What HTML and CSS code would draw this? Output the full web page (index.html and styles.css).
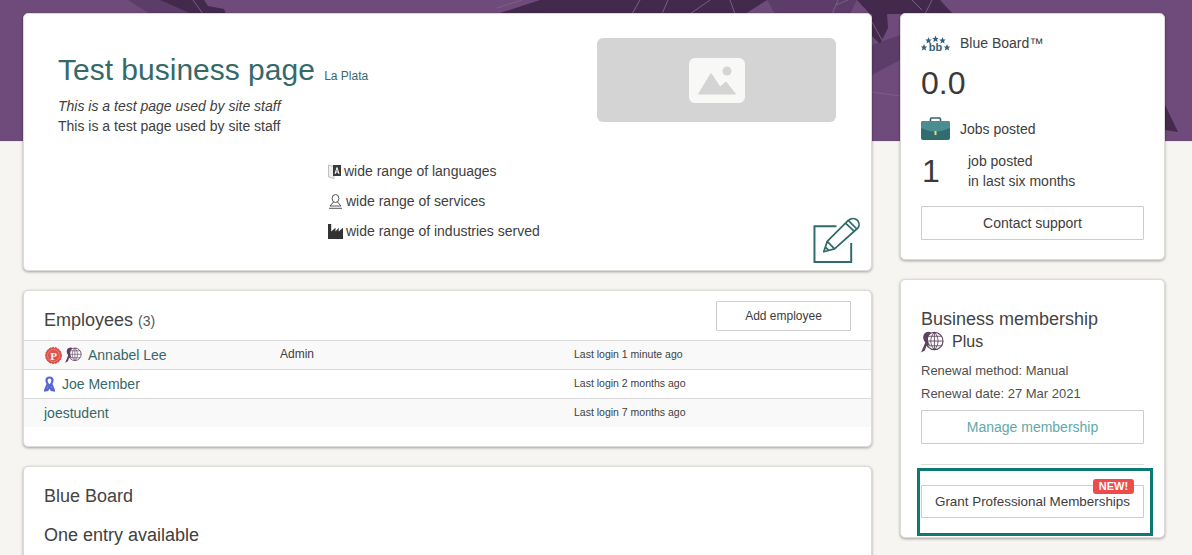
FILE: index.html
```html
<!DOCTYPE html>
<html lang="en">
<head>
<meta charset="utf-8">
<title>Test business page</title>
<link rel="stylesheet" href="styles.css">
</head>
<body>
<svg class="defs" aria-hidden="true">
  <defs>
    <path id="star" d="M0 -3.400 L1 -1.100 L3.300 -1 L1.500 .6 L2.100 3 L0 1.700 L-2.100 3 L-1.500 .6 L-3.300 -1 L-1 -1.100Z"/>
    <g id="plus-ribbon">
      <circle cx="14" cy="10.500" r="9" fill="#fff" stroke="#5d4160" stroke-width="1.200"/>
      <path d="M14 1.500 V19.500 M5 10.500 H23 M6.500 5.500 H21.500 M6.500 15.500 H21.500 M14 1.500 C9 6 9 15 14 19.500 C19 15 19 6 14 1.500" fill="none" stroke="#5d4160" stroke-width=".9"/>
      <path d="M0 22.500 L4.500 12 C1.500 8.500 1.500 3.500 5 1.500 C7 .4 9 .4 10.500 1.500 C7.500 4 6.500 9 8 12.500 L10 16 L7.500 14.500 L5.500 16 L4 20.500Z" fill="#5d4160"/>
    </g>
  </defs>
</svg>
<div class="banner">
  <svg class="banner-art" viewBox="0 0 1192 141" preserveAspectRatio="none" aria-hidden="true">
    <path class="mid" d="M128 0 H165 L195 14 H150Z M767 0 H857 L850 14 H775Z M872 45 L900 35 V60 L872 75Z"/>
    <path class="dark" d="M160 0 H204 L208 6 L224 9 L226 14 H192Z"/>
    <path class="dark" d="M497 14 L540 0 H767 L745 14Z"/>
    <path class="dark" d="M857 0 H940 L953 14 H870Z"/>
    <path class="dark" d="M872 0 H886 L888 28 L880 44 L872 36Z"/>
    <path class="dark" d="M1165 105 L1178 132 L1165 130Z"/>
    <path class="line" d="M193 0 L203 14 M497 8 L522 0 M640 0 L632 14 M668 0 L662 14 M710 0 L690 14 M730 0 L735 14 M838 0 L832 14 M848 0 L836 5 M912 0 L922 10 M932 0 L925 14 M872 22 L882 40 M872 92 L900 96"/>
  </svg>
</div>
<main class="page">
  <div class="col-main">
    <section class="card profile">
      <div class="profile-top">
        <div class="profile-intro">
          <h1 class="title">Test business page <small class="place">La Plata</small></h1>
          <p class="tagline">This is a test page used by site staff</p>
          <p class="desc">This is a test page used by site staff</p>
        </div>
        <div class="logo-box">
          <svg class="logo-icon" viewBox="0 0 56 45" aria-hidden="true">
            <rect width="56" height="45" rx="6" fill="#f8f8f6"/>
            <circle cx="38" cy="13" r="4.500" fill="#d4d4d4"/>
            <path d="M9.500 36 L22 15.500 L31 29 L37 24 L46.500 36Z" fill="#d4d4d4" stroke="#d4d4d4" stroke-linejoin="round"/>
          </svg>
        </div>
      </div>
      <ul class="features">
        <li>
          <svg class="feat-icon narrow" viewBox="0 0 13 15" aria-hidden="true"><path d="M.5 1 L6 2.500 V14.500 L.5 13Z" fill="#eee" stroke="#aaa" stroke-width=".7"/><rect x="5" y="1" width="8" height="11" fill="#3a3a3a"/><path d="M7 10 L9 3.500 L11 10 M7.700 8 H10.300" fill="none" stroke="#fff" stroke-width="1"/></svg>
          wide range of languages
        </li>
        <li>
          <svg class="feat-icon" viewBox="0 0 14 15" aria-hidden="true"><ellipse cx="7" cy="4.500" rx="3.400" ry="4" fill="none" stroke="#444" stroke-width=".9"/><path d="M5 8 L1.500 12 H12.500 L9 8 M.5 14.300 H13.500" fill="none" stroke="#444" stroke-width=".9"/></svg>
          wide range of services
        </li>
        <li>
          <svg class="feat-icon" viewBox="0 0 14 14" aria-hidden="true"><path d="M0 0 H3 V7 L7 3.500 V7 L10 3.500 V7 L14 3.500 V14 H0Z" fill="#333"/></svg>
          wide range of industries served
        </li>
      </ul>
      <svg class="edit-icon" viewBox="0 0 48 48" aria-hidden="true">
        <path d="M24 9 H1.500 V45.500 H39 V26" fill="none" stroke="#2f6b6b" stroke-width="2"/>
        <path d="M11 35 L14.500 24.500 L36 3 C39 .5 43 .5 45.500 3 C47.500 5.500 47.500 9 45.500 11 L22 32Z M14.500 24.500 L22 32 M33.500 6 L42.500 14.500 M36.500 3.500 L45 12 M12.500 30 L16.500 34" fill="none" stroke="#2f6b6b" stroke-width="1.800" stroke-linejoin="round"/>
      </svg>
    </section>

    <section class="card employees">
      <header class="emp-head">
        <h2 class="heading">Employees <span class="count">(3)</span></h2>
        <button class="btn btn-add">Add employee</button>
      </header>
      <div class="emp-row shade">
        <div class="emp-name">
          <svg class="badge-p" viewBox="0 0 17 17" aria-hidden="true"><circle cx="8.500" cy="8.500" r="8" fill="#e0524a" stroke="#c9463f" stroke-width="1" stroke-dasharray="2 1"/><circle cx="8.500" cy="8.500" r="6" fill="none" stroke="#f0a09a" stroke-width=".5"/><text x="8.500" y="12.500" class="badge-letter">P</text></svg>
          <svg class="badge-g" viewBox="0 0 24 23" aria-hidden="true"><use href="#plus-ribbon"/></svg>
          <a class="person">Annabel Lee</a>
        </div>
        <div class="emp-role">Admin</div>
        <div class="emp-login">Last login 1 minute ago</div>
      </div>
      <div class="emp-row">
        <div class="emp-name">
          <svg class="ribbon" viewBox="0 0 11 16" aria-hidden="true"><path d="M3.500 8.500 L1 14.500 L3.500 14 L5.500 10.500 L7.500 14 L10 14.500 L7.500 8.500 M5.500 1.500 C3.500 1.500 2.500 3 2.500 4.500 C2.500 6 4 8.500 5.500 10.500 C7 8.500 8.500 6 8.500 4.500 C8.500 3 7.500 1.500 5.500 1.500Z" fill="none" stroke="#5566d6" stroke-width="2.200"/></svg>
          <a class="person">Joe Member</a>
        </div>
        <div class="emp-role"></div>
        <div class="emp-login">Last login 2 months ago</div>
      </div>
      <div class="emp-row shade">
        <div class="emp-name"><a class="person">joestudent</a></div>
        <div class="emp-role"></div>
        <div class="emp-login">Last login 7 months ago</div>
      </div>
    </section>

    <section class="card board">
      <h2 class="heading">Blue Board</h2>
      <p class="entry">One entry available</p>
    </section>
  </div>

  <aside class="col-side">
    <section class="card side-card stats">
      <div class="stat-label">
        <svg class="bb-icon" viewBox="0 0 29 17" aria-hidden="true">
          <use class="bb-star" href="#star" x="14.500" y="4"/>
          <use class="bb-star" href="#star" x="7.500" y="5.500"/>
          <use class="bb-star" href="#star" x="21.500" y="5.500"/>
          <use class="bb-star" href="#star" x="3" y="12.500"/>
          <use class="bb-star" href="#star" x="26" y="12.500"/>
          <text x="14.500" y="16" class="bb-text">bb</text>
        </svg>
        <span>Blue Board™</span>
      </div>
      <div class="big-num rating">0.0</div>
      <div class="stat-label jobs-label">
        <svg class="case-icon" viewBox="0 0 29 23" aria-hidden="true">
          <path d="M9.500 5 V2 Q9.500 1 10.500 1 H18.500 Q19.500 1 19.500 2 V5" fill="none" stroke="#34616a" stroke-width="1.600"/>
          <rect y="4" width="29" height="19" rx="2" fill="#2f6d70"/>
          <path d="M0 6 Q0 4 2 4 H27 Q29 4 29 6 V11 Q14.500 18 0 11Z" fill="#4b8d90"/>
          <rect x="13.500" y="14" width="2" height="4" fill="#e6d87a"/>
        </svg>
        <span>Jobs posted</span>
      </div>
      <div class="jobs-row">
        <div class="big-num count-one">1</div>
        <div class="jobs-text">job posted<br>in last six months</div>
      </div>
      <button class="btn btn-wide">Contact support</button>
    </section>

    <section class="card side-card membership">
      <h2 class="heading">Business membership</h2>
      <div class="plan">
        <svg class="plan-icon" viewBox="0 0 24 23" aria-hidden="true"><use href="#plus-ribbon"/></svg>
        <span>Plus</span>
      </div>
      <p class="renew">Renewal method: Manual</p>
      <p class="renew">Renewal date: 27 Mar 2021</p>
      <button class="btn btn-wide btn-teal">Manage membership</button>
      <hr class="rule">
      <div class="grant-box">
        <button class="btn btn-wide btn-grant">Grant Professional Memberships</button>
        <span class="new-tag">NEW!</span>
      </div>
    </section>
  </aside>
</main>
</body>
</html>
```

FILE: styles.css
```css
* { box-sizing: border-box; }

html, body {
  height: 555px;
  overflow: hidden;
}

body {
  margin: 0;
  background: #f6f5f1;
  color: #404040;
  font-family: "Liberation Sans", Arial, sans-serif;
  font-size: 14px;
  line-height: 20px;
}

.defs {
  display: block;
  width: 0;
  height: 0;
}

.banner {
  height: 142px;
  background: #6f4b7b;
  border-bottom: 1px solid #e8e6e6;
  overflow: hidden;
}

.banner-art {
  display: block;
  width: 100%;
  height: 100%;
}

.banner-art .dark { fill: #43294c; }
.banner-art .mid { fill: #5c3d69; }
.banner-art .line { stroke: #7a5f84; stroke-width: 1; fill: none; }

.page {
  display: flex;
  gap: 28px;
  margin-top: -129px;
  padding-left: 23px;
}

.col-main {
  width: 849px;
  display: flex;
  flex-direction: column;
  gap: 19px;
}

.col-side {
  width: 265px;
  display: flex;
  flex-direction: column;
  gap: 19px;
}

.card {
  position: relative;
  background: #fff;
  border: 1px solid #dcdbd5;
  border-radius: 5px;
  box-shadow: 0 1px 3px rgba(0, 0, 0, .35);
}

/* profile */
.profile {
  height: 258px;
  padding: 24px 35px 0 34px;
}

.profile-top {
  display: flex;
  justify-content: space-between;
}

.profile-intro { padding-top: 14px; }

.title {
  margin: 0;
  font-size: 30px;
  line-height: 36px;
  font-weight: 400;
  color: #36696a;
}

.place {
  font-size: 12px;
  margin-left: 1px;
}

.tagline {
  margin: 2px 0 0;
  font-style: italic;
}

.desc { margin: 0; }

.logo-box {
  width: 239px;
  height: 84px;
  background: #d4d4d4;
  border-radius: 6px;
  display: flex;
  align-items: center;
  justify-content: center;
}

.logo-icon { width: 56px; height: 45px; }

.features {
  list-style: none;
  margin: 20px 0 0;
  padding: 0 0 0 270px;
}

.features li {
  display: flex;
  align-items: center;
  gap: 3px;
  height: 30px;
}

.feat-icon { width: 15px; height: 15px; }
.feat-icon.narrow { width: 13px; }

.edit-icon {
  position: absolute;
  right: 11px;
  bottom: 5px;
  width: 47px;
  height: 48px;
}

/* employees */
.employees {
  height: 157px;
}

.emp-head {
  display: flex;
  justify-content: space-between;
  height: 49px;
  padding: 10px 20px 0;
}

.heading {
  margin: 0;
  font-size: 18px;
  line-height: 20px;
  font-weight: 400;
  color: #444;
}

.employees .heading { padding-top: 9px; }

.count { font-size: 14px; color: #555; }

.emp-row {
  display: flex;
  height: 29px;
  border-top: 1px solid #d9d9d9;
  padding-left: 20px;
}

.emp-row.shade { background: #f9f9f9; }

.emp-name {
  width: 236px;
  display: flex;
  align-items: center;
  gap: 3px;
}

.person { color: #36696a; }

.emp-role {
  width: 294px;
  font-size: 12px;
  padding-top: 3px;
}

.emp-login {
  font-size: 10.5px;
  padding-top: 3px;
}

.badge-p { width: 17px; height: 17px; margin-left: 1px; }
.badge-letter { font: 700 11px "Liberation Serif", serif; fill: #fff; text-anchor: middle; }
.badge-g { width: 17px; height: 16px; margin-right: 3px; }
.ribbon { width: 11px; height: 16px; margin-right: 4px; }

/* blue board */
.board { height: 200px; padding: 19px 20px; }

.entry {
  margin: 19px 0 0;
  font-size: 18px;
}

/* side */
.side-card { padding: 19px 20px 0; }

.stats { height: 247px; }

.stat-label {
  display: flex;
  align-items: center;
  gap: 10px;
}

.bb-icon { width: 29px; height: 17px; }
.bb-star { fill: #34607a; }
.bb-text { font: 700 11px "Liberation Sans", sans-serif; fill: #34607a; text-anchor: middle; }

.big-num {
  font-size: 32px;
  line-height: 36px;
  color: #3a3a3a;
}

.rating { margin-top: 12px; }

.jobs-label { margin-top: 16px; }

.case-icon { width: 29px; height: 23px; }

.jobs-row {
  display: flex;
  margin-top: 11px;
}

.count-one {
  width: 47px;
  padding: 2px 0 0 1px;
}

.btn {
  display: block;
  background: #fff;
  border: 1px solid #ccc;
  border-radius: 1px;
  color: #3d3d3d;
  font: 14px/20px "Liberation Sans", Arial, sans-serif;
  padding: 0;
}

.btn-add {
  width: 135px;
  height: 30px;
  font-size: 12px;
}

.btn-wide {
  width: 223px;
  height: 34px;
  margin-top: 15px;
}

.membership {
  height: 259px;
  padding-top: 29px;
}

.plan {
  display: flex;
  align-items: center;
  gap: 8px;
  margin-top: 2px;
  font-size: 16px;
}

.plan-icon { width: 23px; height: 22px; }

.renew {
  margin: 0;
  height: 23px;
  line-height: 23px;
  font-size: 13px;
  color: #4f4f4f;
}

.plan + .renew { margin-top: 6px; }

.btn-teal {
  color: #62a8a8;
  margin-top: 5px;
}

.rule {
  width: 223px;
  height: 1px;
  margin: 20px 0 0;
  border: 0;
  background: #ddd;
}

.grant-box {
  position: absolute;
  left: 16px;
  top: 188px;
  width: 236px;
  height: 68px;
  border: 3px solid #0b7a75;
  padding: 14px 0 0 1px;
}

.btn-grant {
  width: 223px;
  height: 33px;
  margin: 0;
  font-size: 13.4px;
}

.new-tag {
  position: absolute;
  top: 8px;
  right: 16px;
  width: 41px;
  height: 15px;
  background: #ee4b4b;
  border-radius: 3px;
  color: #fff;
  font-size: 11px;
  line-height: 15px;
  font-weight: 700;
  text-align: center;
}
```
